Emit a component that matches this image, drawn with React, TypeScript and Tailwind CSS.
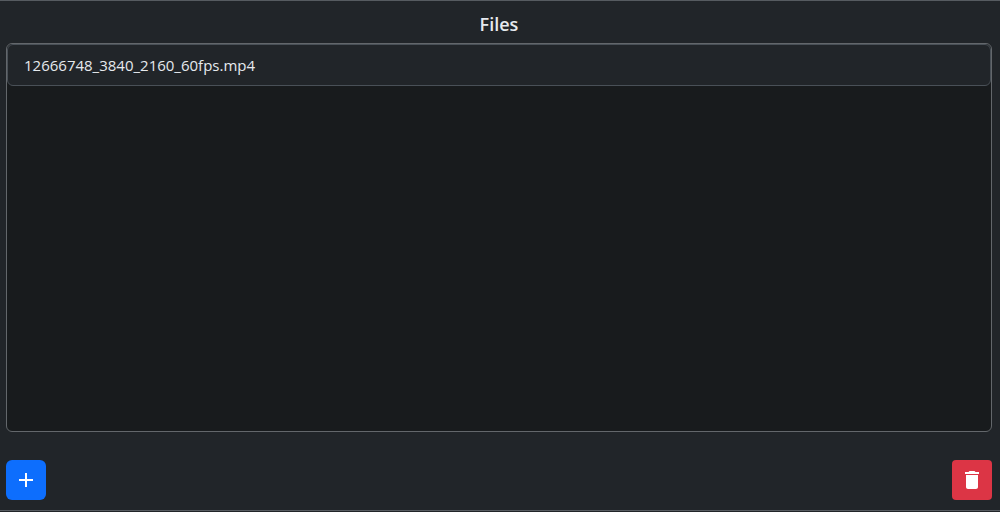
import { useState } from "react";
import { MdAdd, MdDelete } from "react-icons/md";

const initialFiles = ["12666748_3840_2160_60fps.mp4"];

export default function App() {
  const [files, setFiles] = useState<string[]>(initialFiles);

  return (
    <div className="flex min-h-screen flex-col bg-[#212529] pb-px font-['Open_Sans',sans-serif] text-[#e6eaee]">
      <main className="flex flex-1 flex-col border-y border-[#565b60] pt-[11px] pr-2 pb-2.5 pl-1.5">
        <h1 className="text-center text-lg leading-6 font-semibold">Files</h1>
        <ul
          aria-label="Files"
          className="mt-[7px] flex-1 overflow-auto rounded-md border border-[#63676b] bg-[#181b1d]"
        >
          {files.map((file) => (
            <li
              key={file}
              className="rounded-md border border-[#495057] bg-[#212529] px-4 py-2 text-[15px] leading-6"
            >
              {file}
            </li>
          ))}
        </ul>
        <div className="mt-7 flex justify-between">
          <button
            type="button"
            aria-label="Add file"
            onClick={() => setFiles(initialFiles)}
            className="flex size-10 items-center justify-center rounded-md bg-[#0d6efd] text-white"
          >
            <MdAdd className="size-6" />
          </button>
          <button
            type="button"
            aria-label="Delete files"
            onClick={() => setFiles([])}
            className="flex size-10 items-center justify-center rounded-sm bg-[#dc3545] text-white"
          >
            <MdDelete className="size-6" />
          </button>
        </div>
      </main>
    </div>
  );
}
